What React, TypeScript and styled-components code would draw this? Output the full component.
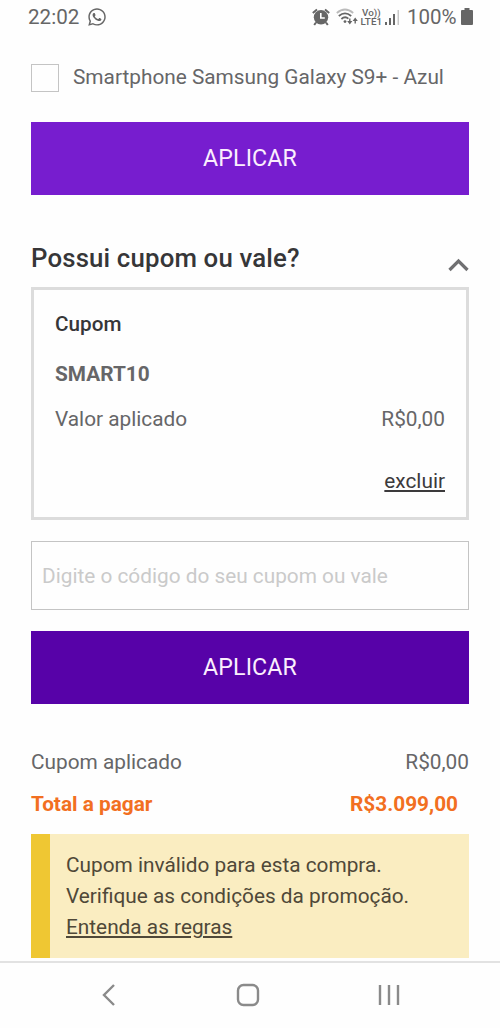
import React from 'react';
import styled, { createGlobalStyle } from 'styled-components';
import { FaWhatsapp } from 'react-icons/fa';

const GlobalStyle = createGlobalStyle`
  * { box-sizing: border-box; }
  body { margin: 0; background: #fefefe; font-family: Roboto, "Liberation Sans", sans-serif; }
`;

const Screen = styled.div`
  width: 500px;
  height: 1028px;
  display: flex;
  flex-direction: column;
  overflow: hidden;
  background: #fefefe;
  color: #666668;
  font-size: 20.8px;
  line-height: 30px;
`;

const StatusBar = styled.header`
  display: flex;
  justify-content: space-between;
  height: 35px;
  padding: 2px 27.5px 0 28px;
  color: #666;
`;

const StatusGroup = styled.div`
  display: flex;
  align-items: center;
  height: 30px;
`;

const Clock = styled.span`
  margin-right: 8px;
  font-size: 20.6px;
`;

const AlarmIcon = styled.svg`
  margin-right: 6px;
`;

const Carrier = styled.div`
  display: flex;
  flex-direction: column;
  width: 22px;
  margin: 0 2.5px 0 0.5px;
  font-size: 9.8px;
  font-weight: 500;
  line-height: 9.5px;
  letter-spacing: 0.1px;
  text-align: center;
`;

const Percent = styled.span`
  margin: 0 4px 0 7px;
  font-size: 20.5px;
`;

const Content = styled.main`
  flex: 1;
  display: flex;
  flex-direction: column;
  padding: 27px 31px 0 31px;
`;

const ProductOption = styled.label`
  display: flex;
  align-items: center;
  height: 31px;
  gap: 14px;
`;

const ProductName = styled.span`
  padding-bottom: 2px;
`;

const CheckBox = styled.span`
  width: 28px;
  height: 28px;
  border: 1px solid #c4c4c4;
  margin-top: 1px;
`;

const ApplyButton = styled.button<{ $dark?: boolean }>`
  width: 438px;
  height: 73px;
  flex: none;
  border: 0;
  padding: 0 0 2px;
  margin: ${(p) => (p.$dark ? '21px 0 0' : '29px 0 0')};
  background: ${(p) => (p.$dark ? '#5702a8' : '#771dcf')};
  color: #fbeefd;
  font: 400 23.2px/30px Roboto, sans-serif;
  letter-spacing: 0.1px;
`;

const SectionHeader = styled.div`
  display: flex;
  justify-content: space-between;
  height: 44px;
  margin-top: 48px;
`;

const Title = styled.h2`
  margin: 0;
  font-size: 25.8px;
  font-weight: 500;
  line-height: 30px;
  letter-spacing: 0.15px;
  color: #363638;
`;

const Chevron = styled.svg`
  margin-top: 14px;
`;

const CouponCard = styled.section`
  width: 437.5px;
  height: 233px;
  flex: none;
  border: 3px solid #dcdcdc;
  padding: 19px 20.5px 0 21px;
`;

const CouponLabel = styled.h3`
  margin: 0;
  font-size: 20.7px;
  font-weight: 500;
  color: #363638;
`;

const CouponCode = styled.div`
  margin-top: 20px;
  font-weight: 700;
`;

const Row = styled.div<{ $top: number; $right?: number }>`
  display: flex;
  justify-content: space-between;
  margin-top: ${(p) => p.$top}px;
  padding-right: ${(p) => p.$right ?? 0}px;
`;

const TotalRow = styled(Row)`
  color: #f26f21;
  font-weight: 700;
`;

const RemoveRow = styled.div`
  display: flex;
  justify-content: flex-end;
  margin-top: 32px;
`;

const Link = styled.a`
  color: inherit;
  text-decoration: underline;
  text-decoration-thickness: 1.5px;
  text-underline-offset: 2px;
`;

const RemoveLink = styled(Link)`
  color: #3c3a3c;
`;

const CodeInput = styled.input`
  width: 438px;
  height: 69px;
  flex: none;
  margin-top: 21px;
  padding: 0 10px;
  border: 1px solid #c4c4c4;
  background: transparent;
  font: 400 20.8px/30px Roboto, sans-serif;
  &::placeholder { color: #cacaca; opacity: 1; }
`;

const Notice = styled.aside`
  width: 438px;
  height: 124px;
  margin-top: 15px;
  padding: 16px 0 0 16px;
  border-left: 19px solid #efc733;
  background: #faedc1;
  color: #4f4838;
  line-height: 31px;
`;

const NavBar = styled.nav`
  display: flex;
  justify-content: space-between;
  align-items: center;
  height: 67px;
  padding: 0 99px 2px 100px;
  border-top: 2px solid #e2e2e2;
`;

const NavIcon = styled.svg`
  fill: none;
  stroke: #8a8a8a;
  stroke-width: 2.4;
`;

export default function App() {
  return (
    <Screen>
      <GlobalStyle />
      <StatusBar>
        <StatusGroup>
          <Clock>22:02</Clock>
          <FaWhatsapp size={20} />
        </StatusGroup>
        <StatusGroup>
          <AlarmIcon width="18" height="18" viewBox="0 0 18 18">
            <circle cx="9" cy="9.3" r="7.2" fill="#666" />
            <path d="M.8 5 5 1.4M17.2 5 13 1.4M4 14.5 2.2 17M14 14.5l1.8 2.5" stroke="#666" strokeWidth="2" />
            <path d="M8.8 5v5h4" fill="none" stroke="#fff" strokeWidth="1.6" />
          </AlarmIcon>
          <svg width="24" height="20" viewBox="0 0 24 20" fill="none" stroke="#666" strokeWidth="1.8">
            <path d="M.8 6Q9-1 17.2 6" stroke="#bbb" />
            <path d="M2.8 9Q9 3.8 15.2 9M5.4 12Q9 8.8 12.4 11.6" />
            <circle cx="9" cy="14.6" r="1.4" fill="#666" stroke="none" />
            <path d="M13.8 11.5v4M19.2 12.5v4" strokeWidth="1.4" />
            <path d="M11.2 14h5.2l-2.6 3.4zM16.6 14h5.2l-2.6-3.4z" fill="#666" stroke="none" />
          </svg>
          <Carrier>
            <span>Vo))</span>
            <span>LTE1</span>
          </Carrier>
          <svg width="15" height="16" viewBox="0 0 15 16" fill="#666">
            <path d="M0 13h2v3H0zM4 9h2v7H4zM8 5h2v11H8z" />
            <path d="M12.5 1h1.5v15h-1.5z" fill="#c8c8c8" />
          </svg>
          <Percent>100%</Percent>
          <svg width="12" height="18" viewBox="0 0 12 18" fill="#666">
            <path d="M3.5 0h5v2H11q1 0 1 1v13q0 1-1 1H1q-1 0-1-1V3q0-1 1-1h2.5z" />
          </svg>
        </StatusGroup>
      </StatusBar>
      <Content>
        <ProductOption>
          <CheckBox />
          <ProductName>Smartphone Samsung Galaxy S9+ - Azul</ProductName>
        </ProductOption>
        <ApplyButton>APLICAR</ApplyButton>
        <SectionHeader>
          <Title>Possui cupom ou vale?</Title>
          <Chevron width="21" height="16" viewBox="0 0 21 16" fill="none" stroke="#707072" strokeWidth="3.2">
            <path d="M1.5 13 10.5 4l9 9" />
          </Chevron>
        </SectionHeader>
        <CouponCard>
          <CouponLabel>Cupom</CouponLabel>
          <CouponCode>SMART10</CouponCode>
          <Row $top={15}>
            <span>Valor aplicado</span>
            <span>R$0,00</span>
          </Row>
          <RemoveRow>
            <RemoveLink>excluir</RemoveLink>
          </RemoveRow>
        </CouponCard>
        <CodeInput placeholder="Digite o código do seu cupom ou vale" />
        <ApplyButton $dark>APLICAR</ApplyButton>
        <Row $top={43}>
          <span>Cupom aplicado</span>
          <span>R$0,00</span>
        </Row>
        <TotalRow $top={12} $right={11}>
          <span>Total a pagar</span>
          <span>R$3.099,00</span>
        </TotalRow>
        <Notice>
          Cupom inválido para esta compra.
          <br />
          Verifique as condições da promoção.
          <br />
          <Link>Entenda as regras</Link>
        </Notice>
      </Content>
      <NavBar>
        <NavIcon width="18" height="24" viewBox="0 0 18 24">
          <path d="M14 2 4 12l10 10" />
        </NavIcon>
        <NavIcon width="24" height="24" viewBox="0 0 24 24">
          <rect x="2" y="2" width="20" height="20" rx="5.5" />
        </NavIcon>
        <NavIcon width="24" height="24" viewBox="0 0 24 24">
          <path d="M3 2v20M12 2v20M21 2v20" />
        </NavIcon>
      </NavBar>
    </Screen>
  );
}
